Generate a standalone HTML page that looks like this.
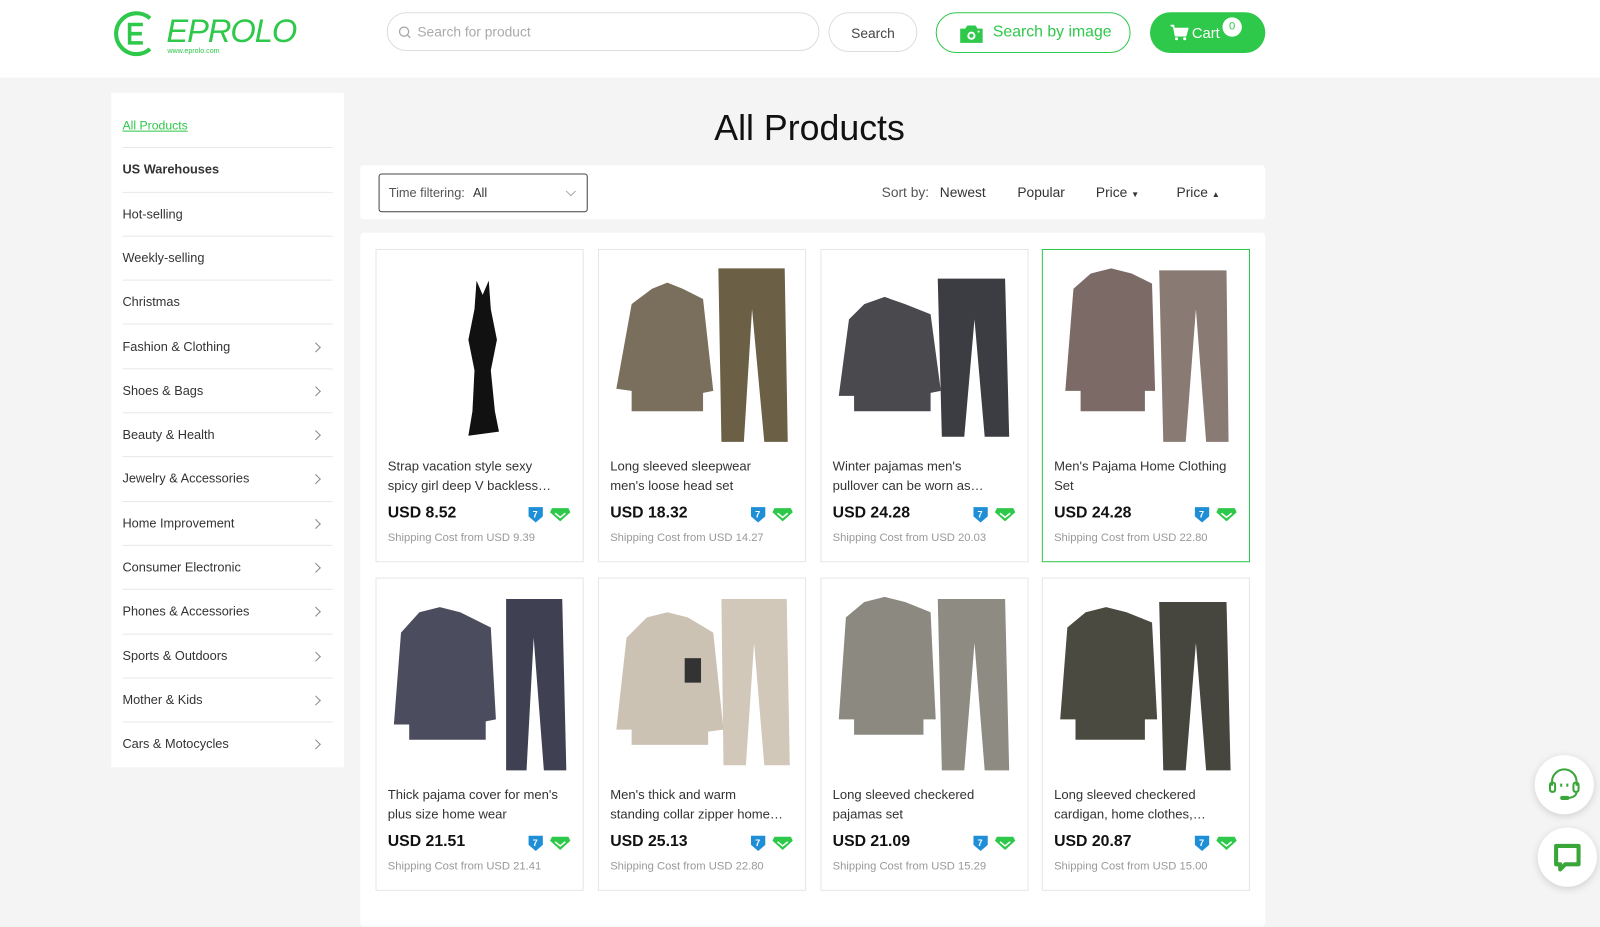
<!DOCTYPE html>
<html><head><meta charset="utf-8"><style>
*{box-sizing:border-box;margin:0;padding:0}
html,body{width:1600px;height:895px;overflow:hidden;background:#f4f4f4}
#w{position:absolute;left:0;top:0;width:1568px;height:877px;transform:scale(1.0204);transform-origin:0 0;font-family:"Liberation Sans",Arial,sans-serif;color:#333}
.hdr{position:absolute;left:0;top:0;width:1568px;height:76px;background:#fff}
.logo{position:absolute;left:109px;top:8px}
.srch{position:absolute;left:379px;top:12px;width:424px;height:38px;border:1px solid #ddd;border-radius:19px;font-size:13.5px;color:#aaa;padding:11px 0 0 29px}
.srch svg{position:absolute;left:10px;top:12px}
.sbtn{position:absolute;left:812px;top:12px;width:87px;height:39px;border:1px solid #ddd;border-radius:20px;font-size:13.5px;color:#444;text-align:center;line-height:39px}
.ibtn{position:absolute;left:917px;top:12px;width:191px;height:40px;border:1.5px solid #2ec84a;border-radius:20px;color:#2ec84a;font-size:15.5px;line-height:38px;padding-left:55px}
.ibtn svg{position:absolute;left:22px;top:10px}
.cart{position:absolute;left:1127px;top:12px;width:113px;height:40px;background:#2ec84a;border-radius:20px;color:#fff;font-size:14.5px;line-height:42px;padding-left:41px}
.cart svg{position:absolute;left:20px;top:12px}
.badge{position:absolute;left:71px;top:5px;width:19px;height:19px;border-radius:50%;background:#fff;color:#2ec84a;font-size:11px;line-height:19px;text-align:center}
.side{position:absolute;left:109px;top:91px;width:228px;height:661px;background:#fff}
.side div{position:absolute;left:11px;width:206px;height:43.3px;border-bottom:1px solid #e8e8e8;font-size:12.5px;color:#333;line-height:43px}
.side div.ch:after{content:"";position:absolute;right:13px;top:18px;width:6px;height:6px;border-right:1px solid #888;border-top:1px solid #888;transform:rotate(45deg)}
h1{position:absolute;left:700px;top:106px;font-size:35px;font-weight:normal;color:#111}
.fbar{position:absolute;left:353px;top:162px;width:887px;height:53px;background:#fff;border-radius:4px}
.sel{position:absolute;left:18px;top:8px;width:205px;height:38px;border:1px solid #444;border-radius:3px;font-size:12.5px;color:#555;line-height:37px;padding-left:9px}
.sel b{font-weight:normal;color:#333;margin-left:8px}
.sel:after{content:"";position:absolute;right:12px;top:13px;width:6px;height:6px;border-right:1px solid #aaa;border-bottom:1px solid #aaa;transform:rotate(45deg)}
.sort{position:absolute;top:19px;font-size:13.5px;color:#333}
.panel{position:absolute;left:353px;top:228px;width:887px;height:680px;background:#fff;border-radius:4px}
.card{position:absolute;width:204px;height:307px;border:1px solid #e6e6e6;background:#fff}
.card.hl{border-color:#2ec84a}
.card svg.im{position:absolute;left:12px;top:8px}
.t{position:absolute;left:11px;top:202px;width:172px;font-size:12.8px;line-height:19px;color:#333;height:38px;overflow:hidden}
.p{position:absolute;left:11px;top:249px;font-size:15.5px;font-weight:bold;color:#111}
.s{position:absolute;left:11px;top:276px;font-size:11px;color:#999}
.ic{position:absolute;left:148px;top:250px}
.fl{position:absolute;width:58px;height:58px;border-radius:50%;background:#fff;box-shadow:0 2px 8px rgba(0,0,0,.15)}
</style></head><body><div id="w">
<div class="hdr">
<svg class="logo" width="200" height="50" viewBox="0 0 200 50">
<path d="M38 10 A20 20 0 1 0 38 40" fill="none" stroke="#2ec84a" stroke-width="4"/>
<path d="M31 16 H18 V34 H31 M18 25 H30" fill="none" stroke="#2ec84a" stroke-width="3.5"/>
<text x="54" y="33" font-family="Liberation Sans" font-style="italic" font-size="32" fill="#2ec84a" letter-spacing="-1">EPROLO</text>
<text x="55" y="44" font-family="Liberation Sans" font-size="7" fill="#2ec84a">www.eprolo.com</text>
</svg>
<div class="srch"><svg width="13" height="13"><circle cx="6" cy="6" r="4.5" fill="none" stroke="#aaa" stroke-width="1.3"/><path d="M9 9l3 3" stroke="#aaa" stroke-width="1.3"/></svg>Search for product</div>
<div class="sbtn">Search</div>
<div class="ibtn"><svg width="24" height="20" viewBox="0 0 24 20"><path d="M1 5h5l2-3h8l2 3h5v14H1z" fill="#2ec84a"/><circle cx="12" cy="12" r="4" fill="#fff"/><circle cx="12" cy="12" r="2" fill="#2ec84a"/><circle cx="19" cy="8" r="1" fill="#fff"/></svg>Search by image</div>
<div class="cart"><svg width="18" height="16" viewBox="0 0 18 16"><path d="M0 1h3l2 10h10l2-7H4" fill="#fff" stroke="#fff" stroke-width="1.5"/><circle cx="6" cy="14" r="1.5" fill="#fff"/><circle cx="14" cy="14" r="1.5" fill="#fff"/></svg>Cart<span class="badge">0</span></div>
</div>
<div class="side">
<div style="top:11px;color:#2ec84a;text-decoration:underline;font-size:12px">All Products</div>
<div style="top:54.3px;font-weight:bold">US Warehouses</div>
<div style="top:97.6px">Hot-selling</div>
<div style="top:140.9px">Weekly-selling</div>
<div style="top:184.2px">Christmas</div>
<div class="ch" style="top:227.5px">Fashion &amp; Clothing</div>
<div class="ch" style="top:270.8px">Shoes &amp; Bags</div>
<div class="ch" style="top:314.1px">Beauty &amp; Health</div>
<div class="ch" style="top:357.4px">Jewelry &amp; Accessories</div>
<div class="ch" style="top:400.7px">Home Improvement</div>
<div class="ch" style="top:444px">Consumer Electronic</div>
<div class="ch" style="top:487.3px">Phones &amp; Accessories</div>
<div class="ch" style="top:530.6px">Sports &amp; Outdoors</div>
<div class="ch" style="top:573.9px">Mother &amp; Kids</div>
<div class="ch" style="top:617.2px;border:none">Cars &amp; Motocycles</div>
</div>
<h1>All Products</h1>
<div class="fbar">
<div class="sel">Time filtering:<b>All</b></div>
<span class="sort" style="left:511px;color:#555">Sort by:</span>
<span class="sort" style="left:568px">Newest</span>
<span class="sort" style="left:644px">Popular</span>
<span class="sort" style="left:721px">Price <span style="font-size:8px">▼</span></span>
<span class="sort" style="left:800px">Price <span style="font-size:8px">▲</span></span>
</div>
<div class="panel"></div>

<div class="card" style="left:368px;top:244px"><svg class="im" width="180" height="190" viewBox="0 0 180 190"><path d="M86 22 L92 36 L98 22 L100 50 L106 80 L100 110 L104 150 L108 170 L78 174 L82 150 L84 110 L78 80 L84 50Z" fill="#111"/></svg>
<div class="t">Strap vacation style sexy spicy girl deep V backless…</div><div class="p">USD 8.52</div><svg class="ic" width="42" height="18"><path d="M1 2h14v9l-7 6-7-6z" fill="#1e8fd6"/><text x="5" y="12" font-size="9" fill="#fff" font-weight="bold">7</text><path d="M24 3h16l2 4-10 9-10-9z" fill="#2ec84a"/><path d="M27 8l5 4 5-4" stroke="#fff" fill="none" stroke-width="1.5"/></svg><div class="s">Shipping Cost from USD 9.39</div></div>

<div class="card" style="left:586px;top:244px"><svg class="im" width="180" height="190" viewBox="0 0 180 190"><path d="M40 30 L55 24 L70 30 L90 40 L100 130 L90 132 L90 150 L20 150 L20 130 L5 128 L20 45Z" fill="#7a6e5c"/><path d="M105 10 L170 10 L173 180 L150 180 L138 50 L130 180 L108 180Z" fill="#6b5f45"/></svg>
<div class="t">Long sleeved sleepwear men's loose head set</div><div class="p">USD 18.32</div><svg class="ic" width="42" height="18"><path d="M1 2h14v9l-7 6-7-6z" fill="#1e8fd6"/><text x="5" y="12" font-size="9" fill="#fff" font-weight="bold">7</text><path d="M24 3h16l2 4-10 9-10-9z" fill="#2ec84a"/><path d="M27 8l5 4 5-4" stroke="#fff" fill="none" stroke-width="1.5"/></svg><div class="s">Shipping Cost from USD 14.27</div></div>

<div class="card" style="left:804px;top:244px"><svg class="im" width="180" height="190" viewBox="0 0 180 190"><path d="M30 45 L50 38 L70 45 L95 55 L105 130 L95 132 L95 150 L20 150 L20 135 L5 135 L15 60Z" fill="#4a4a4e"/><path d="M102 20 L168 20 L172 175 L148 175 L138 60 L128 175 L106 175Z" fill="#3c3d42"/></svg>
<div class="t">Winter pajamas men's pullover can be worn as…</div><div class="p">USD 24.28</div><svg class="ic" width="42" height="18"><path d="M1 2h14v9l-7 6-7-6z" fill="#1e8fd6"/><text x="5" y="12" font-size="9" fill="#fff" font-weight="bold">7</text><path d="M24 3h16l2 4-10 9-10-9z" fill="#2ec84a"/><path d="M27 8l5 4 5-4" stroke="#fff" fill="none" stroke-width="1.5"/></svg><div class="s">Shipping Cost from USD 20.03</div></div>

<div class="card hl" style="left:1021px;top:244px"><svg class="im" width="180" height="190" viewBox="0 0 180 190"><path d="M35 15 L55 10 L75 15 L95 25 L98 130 L88 130 L88 150 L25 150 L25 130 L10 130 L18 30Z" fill="#7b6a66"/><path d="M102 12 L168 12 L170 180 L148 180 L138 50 L128 180 L106 180Z" fill="#8a7a74"/></svg>
<div class="t">Men's Pajama Home Clothing Set</div><div class="p">USD 24.28</div><svg class="ic" width="42" height="18"><path d="M1 2h14v9l-7 6-7-6z" fill="#1e8fd6"/><text x="5" y="12" font-size="9" fill="#fff" font-weight="bold">7</text><path d="M24 3h16l2 4-10 9-10-9z" fill="#2ec84a"/><path d="M27 8l5 4 5-4" stroke="#fff" fill="none" stroke-width="1.5"/></svg><div class="s">Shipping Cost from USD 22.80</div></div>

<div class="card" style="left:368px;top:566px"><svg class="im" width="180" height="190" viewBox="0 0 180 190"><path d="M30 25 L50 20 L70 25 L100 40 L105 130 L95 132 L95 150 L20 150 L20 135 L5 135 L12 45Z" fill="#4b4c5e"/><path d="M115 12 L170 12 L174 180 L152 180 L142 50 L135 180 L115 180Z" fill="#3f4152"/></svg>
<div class="t">Thick pajama cover for men's plus size home wear</div><div class="p">USD 21.51</div><svg class="ic" width="42" height="18"><path d="M1 2h14v9l-7 6-7-6z" fill="#1e8fd6"/><text x="5" y="12" font-size="9" fill="#fff" font-weight="bold">7</text><path d="M24 3h16l2 4-10 9-10-9z" fill="#2ec84a"/><path d="M27 8l5 4 5-4" stroke="#fff" fill="none" stroke-width="1.5"/></svg><div class="s">Shipping Cost from USD 21.41</div></div>

<div class="card" style="left:586px;top:566px"><svg class="im" width="180" height="190" viewBox="0 0 180 190"><path d="M35 30 L55 25 L75 30 L100 45 L110 140 L95 142 L95 155 L20 155 L20 140 L5 140 L15 50Z" fill="#cbc2b4"/><path d="M108 12 L172 12 L175 175 L150 175 L140 55 L132 175 L110 175Z" fill="#d2c8ba"/><rect x="72" y="70" width="16" height="24" fill="#333"/></svg>
<div class="t">Men's thick and warm standing collar zipper home…</div><div class="p">USD 25.13</div><svg class="ic" width="42" height="18"><path d="M1 2h14v9l-7 6-7-6z" fill="#1e8fd6"/><text x="5" y="12" font-size="9" fill="#fff" font-weight="bold">7</text><path d="M24 3h16l2 4-10 9-10-9z" fill="#2ec84a"/><path d="M27 8l5 4 5-4" stroke="#fff" fill="none" stroke-width="1.5"/></svg><div class="s">Shipping Cost from USD 22.80</div></div>

<div class="card" style="left:804px;top:566px"><svg class="im" width="180" height="190" viewBox="0 0 180 190"><path d="M30 15 L50 10 L70 15 L95 25 L100 130 L88 130 L88 145 L20 145 L20 130 L5 130 L12 30Z" fill="#8c8a80"/><path d="M102 12 L168 12 L172 180 L148 180 L138 55 L128 180 L106 180Z" fill="#8e8b82"/></svg>
<div class="t">Long sleeved checkered pajamas set</div><div class="p">USD 21.09</div><svg class="ic" width="42" height="18"><path d="M1 2h14v9l-7 6-7-6z" fill="#1e8fd6"/><text x="5" y="12" font-size="9" fill="#fff" font-weight="bold">7</text><path d="M24 3h16l2 4-10 9-10-9z" fill="#2ec84a"/><path d="M27 8l5 4 5-4" stroke="#fff" fill="none" stroke-width="1.5"/></svg><div class="s">Shipping Cost from USD 15.29</div></div>

<div class="card" style="left:1021px;top:566px"><svg class="im" width="180" height="190" viewBox="0 0 180 190"><path d="M30 25 L50 20 L70 25 L95 35 L100 130 L88 130 L88 150 L20 150 L20 130 L5 130 L12 40Z" fill="#4a4a40"/><path d="M102 15 L168 15 L172 180 L148 180 L138 55 L128 180 L106 180Z" fill="#46463e"/></svg>
<div class="t">Long sleeved checkered cardigan, home clothes,…</div><div class="p">USD 20.87</div><svg class="ic" width="42" height="18"><path d="M1 2h14v9l-7 6-7-6z" fill="#1e8fd6"/><text x="5" y="12" font-size="9" fill="#fff" font-weight="bold">7</text><path d="M24 3h16l2 4-10 9-10-9z" fill="#2ec84a"/><path d="M27 8l5 4 5-4" stroke="#fff" fill="none" stroke-width="1.5"/></svg><div class="s">Shipping Cost from USD 15.00</div></div>

<div class="fl" style="left:1504px;top:740px"><svg width="58" height="58" viewBox="0 0 58 58"><path d="M17 30v-4a12 12 0 0 1 24 0v4" fill="none" stroke="#3aa63a" stroke-width="2"/><rect x="15" y="27" width="5" height="9" rx="2" fill="none" stroke="#3aa63a" stroke-width="2"/><rect x="38" y="27" width="5" height="9" rx="2" fill="none" stroke="#3aa63a" stroke-width="2"/><path d="M41 36q0 5-8 6" fill="none" stroke="#3aa63a" stroke-width="2"/><rect x="25" y="40" width="9" height="4" rx="2" fill="#3aa63a"/><path d="M26 28v3M32 28v3" stroke="#3aa63a" stroke-width="2"/></svg></div>
<div class="fl" style="left:1507px;top:811px"><svg width="58" height="58" viewBox="0 0 58 58"><path d="M18 18h22v18H27l-5 5v-5h-4z" fill="none" stroke="#3aa63a" stroke-width="4" stroke-linejoin="round"/></svg></div>
</div></body></html>
